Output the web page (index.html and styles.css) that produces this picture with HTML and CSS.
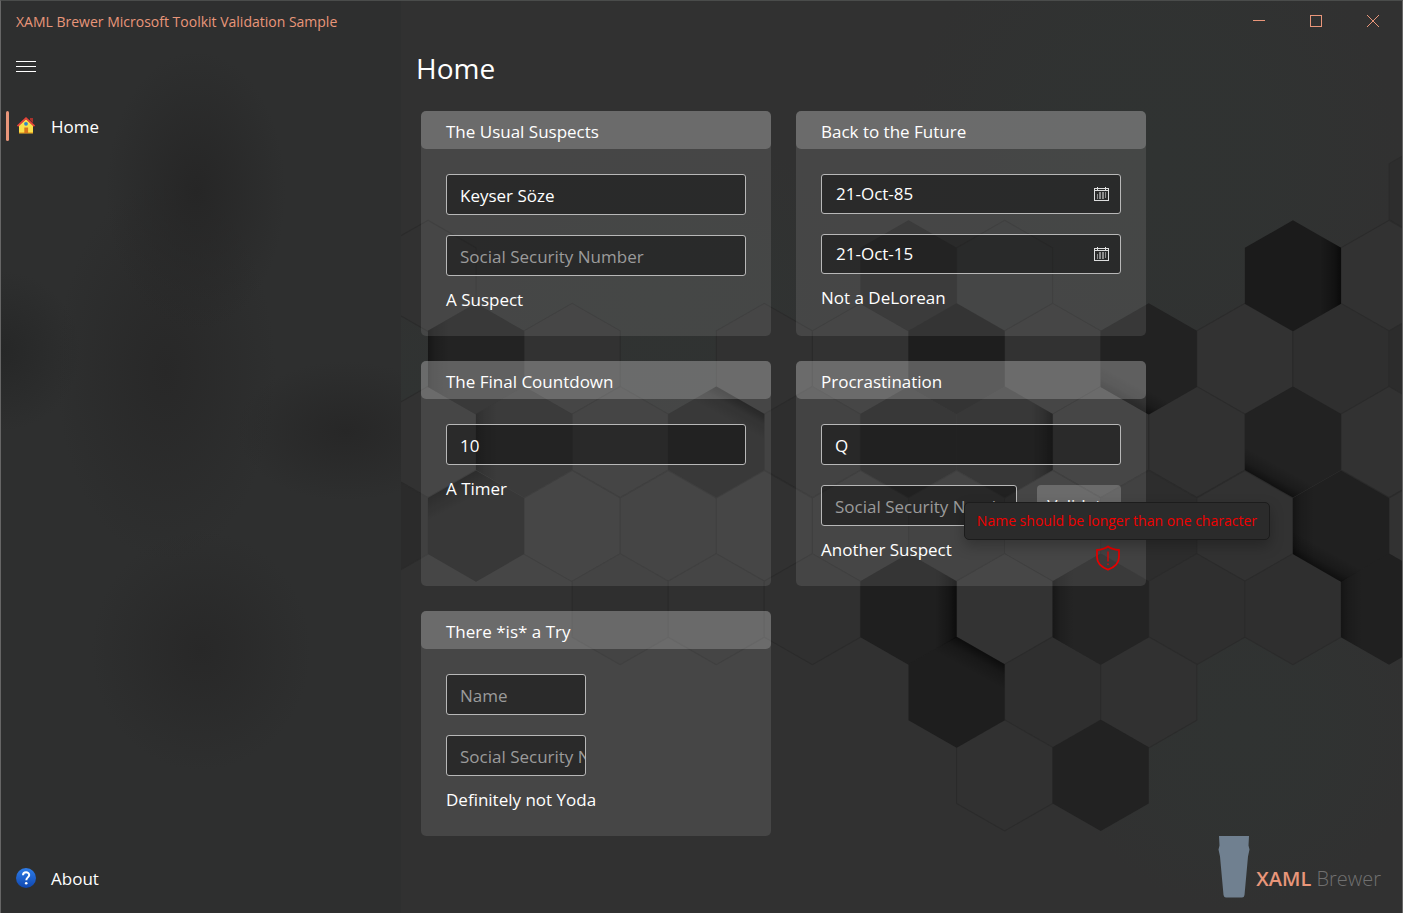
FILE: index.html
```html
<!DOCTYPE html>
<html lang="en">
<head>
<meta charset="utf-8">
<title>XAML Brewer Microsoft Toolkit Validation Sample</title>
<link rel="stylesheet" href="styles.css">
</head>
<body>
<div class="window">
  <aside class="sidebar">
    <div class="app-title">XAML Brewer Microsoft Toolkit Validation Sample</div>
    <button class="menu-button" type="button" aria-label="Toggle navigation">
      <svg width="20" height="11" viewBox="0 0 20 11" shape-rendering="crispEdges"><path d="M0 .5h20M0 5.500h20M0 10.500h20" stroke="#fff"/></svg>
    </button>
    <nav class="nav">
      <a class="nav-item current" href="#home">
        <svg class="nav-icon" viewBox="0 0 20 20">
          <path d="M14 2h3v5l-3-3z" fill="#a8322c"/>
          <path d="M3 9.500 10 3l7 6.500V17H3z" fill="#fbe04a"/>
          <path d="M3 16h14v1.500H3z" fill="#f0b429"/>
          <path d="M1.500 10.200 10 2.200l8.500 8" fill="none" stroke="#e8433a" stroke-width="1.800"/>
          <path d="M8.300 11.500h3.800v5.500H8.300z" fill="#d9751e"/>
          <circle cx="10" cy="7.800" r="1.900" fill="#2f86c8"/>
        </svg>
        <span>Home</span>
      </a>
      <a class="nav-item about" href="#about">
        <svg class="nav-icon" viewBox="0 0 20 20">
          <defs><linearGradient id="help" x1="0" y1="0" x2="0" y2="1"><stop offset="0" stop-color="#2f7de8"/><stop offset="1" stop-color="#0f47b0"/></linearGradient></defs>
          <circle cx="10" cy="10" r="10" fill="url(#help)"/>
          <path d="M7 7.200c0-3.800 6.200-3.700 6.200-.2 0 2.300-2.900 2.500-2.900 5.200" fill="none" stroke="#fff" stroke-width="2"/>
          <circle cx="10.200" cy="15.200" r="1.300" fill="#fff"/>
        </svg>
        <span>About</span>
      </a>
    </nav>
  </aside>

  <main class="main">
    <svg class="backdrop" viewBox="401 1 1001 911" preserveAspectRatio="xMidYMid slice" aria-hidden="true">
      <defs>
        <radialGradient id="tint"><stop offset="0" stop-color="#303332"/><stop offset=".5" stop-color="#303332" stop-opacity=".8"/><stop offset="1" stop-color="#303332" stop-opacity="0"/></radialGradient>
        <path id="hex" d="M.5 0 48.500 27.500V83.500L.5 111-47.500 83.500V27.500z"/>
        <linearGradient id="right" x1="1" y1="0" x2="0" y2="0"><stop offset="0" stop-opacity=".6"/><stop offset=".08" stop-opacity=".3"/><stop offset=".22" stop-opacity="0"/></linearGradient>
        <linearGradient id="left" x1="0" y1="0" x2="1" y2="0"><stop offset="0" stop-opacity=".35"/><stop offset=".08" stop-opacity=".15"/><stop offset=".22" stop-opacity="0"/></linearGradient>
        <linearGradient id="bottomleft" gradientUnits="userSpaceOnUse" x1="-24" y1="97" x2="-14" y2="79"><stop offset="0" stop-opacity=".5"/><stop offset=".4" stop-opacity=".2"/><stop offset="1" stop-opacity="0"/></linearGradient>
        <linearGradient id="topright" gradientUnits="userSpaceOnUse" x1="24" y1="14" x2="13" y2="34"><stop offset="0" stop-opacity=".55"/><stop offset=".4" stop-opacity=".2"/><stop offset="1" stop-opacity="0"/></linearGradient>
        <linearGradient id="topleft" gradientUnits="userSpaceOnUse" x1="-24" y1="14" x2="-14" y2="33"><stop offset="0" stop-opacity=".35"/><stop offset="1" stop-opacity="0"/></linearGradient>
      </defs>
      <rect x="401" width="1002" height="913" fill="#313131"/>
      <ellipse cx="1150" cy="160" rx="250" ry="260" fill="url(#tint)"/>
      <ellipse cx="1240" cy="730" rx="180" ry="180" fill="url(#tint)"/>
      <ellipse cx="660" cy="300" rx="230" ry="170" fill="url(#tint)"/>
      <ellipse cx="401" cy="420" rx="120" ry="150" fill="url(#tint)"/>
      <g fill="#323232" stroke="#2b2b2b">
        <use href="#hex" x="1436" y="136" fill="#2d2d2d"/>
        <use href="#hex" x="428" y="220" fill="#313131"/>
        <use href="#hex" x="1004" y="220" fill="#303131"/>
        <use href="#hex" x="1388" y="220"/>
        <use href="#hex" x="572" y="303"/>
        <use href="#hex" x="764" y="303" fill="#313131"/>
        <use href="#hex" x="860" y="303"/>
        <use href="#hex" x="1052" y="303"/>
        <use href="#hex" x="1244" y="303"/>
        <use href="#hex" x="1340" y="303" fill="#2f2f2f"/>
        <use href="#hex" x="1436" y="303" fill="#2c2c2c"/>
        <use href="#hex" x="428" y="386"/>
        <use href="#hex" x="620" y="386" fill="#303030"/>
        <use href="#hex" x="812" y="386" fill="#2e2e2e"/>
        <use href="#hex" x="1100" y="386"/>
        <use href="#hex" x="1196" y="386" fill="#313131"/>
        <use href="#hex" x="1388" y="386"/>
        <use href="#hex" x="380" y="470" fill="#2b2b2b"/>
        <use href="#hex" x="572" y="470"/>
        <use href="#hex" x="668" y="470" fill="#303030"/>
        <use href="#hex" x="764" y="470" fill="#313131"/>
        <use href="#hex" x="860" y="470"/>
        <use href="#hex" x="956" y="470" fill="#2f2f2f"/>
        <use href="#hex" x="1052" y="470"/>
        <use href="#hex" x="1148" y="470" fill="#2d2d2d"/>
        <use href="#hex" x="1244" y="470"/>
        <use href="#hex" x="1436" y="470"/>
        <use href="#hex" x="620" y="553" fill="#2f2f2f"/>
        <use href="#hex" x="716" y="553" fill="#303030"/>
        <use href="#hex" x="812" y="553" fill="#303030"/>
        <use href="#hex" x="1004" y="553" fill="#333"/>
        <use href="#hex" x="1196" y="553" fill="#2f2f2f"/>
        <use href="#hex" x="1292" y="553" fill="#2f2f2f"/>
        <use href="#hex" x="1052" y="636" fill="#2f2f2f"/>
        <use href="#hex" x="1148" y="636" fill="#313131"/>
        <use href="#hex" x="1004" y="719" fill="#313131"/>
      </g>
      <g fill="#222">
        <use href="#hex" x="1292" y="220" fill="#1b1b1b"/>
        <use href="#hex" x="908" y="220" fill="#252525"/>
        <use href="#hex" x="476" y="303" fill="#232323"/>
        <use href="#hex" x="956" y="303" fill="#1e1e1e"/>
        <use href="#hex" x="1148" y="303"/>
        <use href="#hex" x="524" y="386" fill="#252525"/>
        <use href="#hex" x="716" y="386" fill="#232323"/>
        <use href="#hex" x="908" y="386"/>
        <use href="#hex" x="1004" y="386"/>
        <use href="#hex" x="1292" y="386"/>
        <use href="#hex" x="476" y="470"/>
        <use href="#hex" x="1340" y="470" fill="#202020"/>
        <use href="#hex" x="908" y="553" fill="#1f1f1f"/>
        <use href="#hex" x="1100" y="553" fill="#242424"/>
        <use href="#hex" x="1388" y="553" fill="#202020"/>
        <use href="#hex" x="956" y="636" fill="#1e1e1e"/>
        <use href="#hex" x="1100" y="719"/>
      </g>
      <use href="#hex" x="1292" y="220" fill="url(#right)"/>
      <use href="#hex" x="908" y="553" fill="url(#right)"/>
      <use href="#hex" x="1004" y="386" fill="url(#right)"/>
      <use href="#hex" x="1340" y="470" fill="url(#left)"/>
      <use href="#hex" x="1388" y="553" fill="url(#left)"/>
      <use href="#hex" x="1100" y="553" fill="url(#left)"/>
      <use href="#hex" x="476" y="303" fill="url(#left)"/>
      <use href="#hex" x="524" y="386" fill="url(#left)"/>
      <use href="#hex" x="1292" y="386" fill="url(#bottomleft)"/>
      <use href="#hex" x="1340" y="470" fill="url(#bottomleft)"/>
      <use href="#hex" x="1148" y="303" fill="url(#bottomleft)"/>
      <use href="#hex" x="956" y="636" fill="url(#topright)"/>
      <use href="#hex" x="716" y="386" fill="url(#topright)"/>
      <use href="#hex" x="476" y="470" fill="url(#topleft)"/>
    </svg>

    <div class="titlebar">
      <button type="button" aria-label="Minimize"><svg width="12" height="12" viewBox="0 0 12 12" shape-rendering="crispEdges"><path d="M0 5.500h12"/></svg></button>
      <button type="button" aria-label="Maximize"><svg width="12" height="12" viewBox="0 0 12 12" shape-rendering="crispEdges"><path d="M.5.500h11v11H.5z"/></svg></button>
      <button type="button" aria-label="Close"><svg width="12" height="12" viewBox="0 0 12 12"><path d="m0 0 12 12M12 0 0 12"/></svg></button>
    </div>

    <h1 class="page-title">Home</h1>

    <div class="cards">
      <section class="card">
        <h2>The Usual Suspects</h2>
        <div class="card-body">
          <div class="fields">
            <input type="text" value="Keyser Söze" aria-label="Name">
            <input type="text" placeholder="Social Security Number" aria-label="Social Security Number">
          </div>
          <p class="status">A Suspect</p>
        </div>
      </section>

      <section class="card">
        <h2>Back to the Future</h2>
        <div class="card-body">
          <div class="fields">
            <button class="date" type="button"><span>21-Oct-85</span>
              <svg width="15" height="15" viewBox="0 0 15 15" shape-rendering="crispEdges"><path d="M.5 1.500h14v12H.5zM0 3.500h15M3.500 0v3M11.500 0v3" fill="none" stroke="#ddd"/><path d="M3.500 7v5M5.500 5v7M6.500 5v7M8.500 5v7M9.500 5v7M11.500 5v6" stroke="#8c8c8c"/></svg>
            </button>
            <button class="date" type="button"><span>21-Oct-15</span>
              <svg width="15" height="15" viewBox="0 0 15 15" shape-rendering="crispEdges"><path d="M.5 1.500h14v12H.5zM0 3.500h15M3.500 0v3M11.500 0v3" fill="none" stroke="#ddd"/><path d="M3.500 7v5M5.500 5v7M6.500 5v7M8.500 5v7M9.500 5v7M11.500 5v6" stroke="#8c8c8c"/></svg>
            </button>
          </div>
          <p class="status">Not a DeLorean</p>
        </div>
      </section>

      <section class="card">
        <h2>The Final Countdown</h2>
        <div class="card-body">
          <div class="fields">
            <input type="text" value="10" aria-label="Countdown">
          </div>
          <p class="status">A Timer</p>
        </div>
      </section>

      <section class="card">
        <h2>Procrastination</h2>
        <div class="card-body">
          <div class="fields">
            <input type="text" value="Q" aria-label="Name">
            <div class="field-row">
              <input type="text" placeholder="Social Security Number" aria-label="Social Security Number">
              <button class="validate" type="button">Validate</button>
            </div>
          </div>
          <div class="status-row">
            <p class="status">Another Suspect</p>
            <div class="warning">
              <svg width="26" height="26" viewBox="0 0 26 26" fill="none" stroke="#e60000"><path d="M13 1.500c3 2.300 6.500 3.300 11 3.500v7c0 6-4 10-11 12.700C6 22 2 18 2 12V5c4.500-.2 8-1.200 11-3.500z" stroke-width="1.800"/><path d="M13 6.500v10M13 18.500v1.500" stroke-width="1.300"/></svg>
              <div class="tooltip" role="tooltip">Name should be longer than one character</div>
            </div>
          </div>
        </div>
      </section>

      <section class="card">
        <h2>There *is* a Try</h2>
        <div class="card-body">
          <div class="fields narrow">
            <input type="text" placeholder="Name" aria-label="Name">
            <input type="text" placeholder="Social Security Number" aria-label="Social Security Number">
          </div>
          <p class="status">Definitely not Yoda</p>
        </div>
      </section>
    </div>

    <footer class="brand">
      <svg width="32" height="62" viewBox="0 0 32 62"><path d="M1 0h30l-.5 9.500 1 4-1.500 7L26.500 59q-.3 2.500-2.500 2.500H8Q6 61.500 5.500 59L2 20.500.5 13.500l1-4z" fill="#708090"/></svg>
      <p><strong>XAML</strong> <span>Brewer</span></p>
    </footer>
  </main>
</div>
</body>
</html>
```
FILE: styles.css
```css
* { box-sizing: border-box; }

body {
  margin: 0;
  background: #313131;
  color: #fff;
  font-family: "Open Sans", "Noto Sans", sans-serif;
  font-size: 17px;
  line-height: 24px;
}

h1, h2, p { margin: 0; font-weight: 400; }

button, input { font: inherit; color: inherit; }

button { border: 0; padding: 0; background: none; }

svg { display: block; flex: none; }

.window {
  display: grid;
  grid-template-columns: 400px minmax(0, 1fr);
  min-height: 100vh;
  border: 1px solid #666;
  border-top-color: #4a4c4b;
}

.sidebar {
  display: flex;
  flex-direction: column;
  background:
    radial-gradient(ellipse 90px 140px at 195px 190px, #262626, transparent),
    radial-gradient(ellipse 110px 190px at 165px 370px, #282828, transparent),
    radial-gradient(ellipse 80px 80px at 0 350px, #262727, transparent),
    radial-gradient(ellipse 110px 70px at 345px 430px, #272727, transparent),
    radial-gradient(ellipse 110px 120px at 200px 650px, #282828, transparent),
    #2e2f2f;
}

.app-title {
  padding: 10px 15px 0;
  color: #e9967a;
  font-size: 14px;
  line-height: 22px;
}

.menu-button {
  align-self: flex-start;
  margin-top: 13px;
  padding: 15px;
}

.nav {
  display: flex;
  flex-direction: column;
  flex: 1;
  margin-top: 14px;
}

.nav-item {
  display: flex;
  align-items: center;
  gap: 15px;
  height: 50px;
  padding: 0 15px 0 5px;
  color: inherit;
  text-decoration: none;
}

.nav-item span { padding-top: 2px; }

.nav-item::before {
  content: "";
  width: 3px;
  height: 30px;
  border-radius: 2px;
  margin-right: -8px;
}

.nav-item.current::before { background: #e9967a; }

.nav-item.about { margin-top: auto; margin-bottom: 10px; }

.nav-icon { width: 20px; height: 20px; }

.main {
  position: relative;
  isolation: isolate;
  display: flex;
  flex-direction: column;
}

.backdrop {
  position: absolute;
  inset: 0;
  z-index: -1;
  width: 100%;
  height: 100%;
}

.titlebar {
  display: flex;
  justify-content: flex-end;
  padding-right: 1px;
}

.titlebar button {
  display: grid;
  place-items: center;
  width: 57px;
  height: 40px;
}

.titlebar path { fill: none; stroke: #e9967a; }

.page-title {
  padding: 7px 15px 23px;
  font-size: 28px;
  line-height: 40px;
}

.cards {
  display: grid;
  grid-template-columns: repeat(2, 350px);
  gap: 25px;
  padding: 0 20px;
}

.card {
  min-height: 225px;
  border-radius: 5px;
  background: rgba(255, 255, 255, .1);
}

.card h2 {
  padding: 9px 25px 5px;
  border-radius: 5px;
  background: rgba(255, 255, 255, .2);
  font-size: 17px;
  line-height: 24px;
}

.card-body { padding: 25px 25px 0; }

.fields { display: grid; gap: 20px; }

.fields.narrow { width: 140px; }

.fields input,
.date {
  width: 100%;
  min-width: 0;
  border: 1px solid #b8b8b8;
  border-radius: 3px;
  background: rgba(0, 0, 0, .4);
}

.fields input {
  height: 41px;
  padding: 2px 0 0 13px;
}

.fields input::placeholder { color: #9b9b9b; opacity: 1; }

.date {
  display: flex;
  align-items: center;
  justify-content: space-between;
  height: 40px;
  padding: 0 11px 0 14px;
}

.field-row {
  display: grid;
  grid-template-columns: minmax(0, 1fr) 84px;
  gap: 20px;
}

.validate {
  border-radius: 4px;
  background: rgba(255, 255, 255, .2);
}

.status { margin-top: 12px; }

.status-row { display: flex; justify-content: space-between; }

.warning { position: relative; margin-top: 19px; }

.tooltip {
  position: absolute;
  right: -149px;
  bottom: 31px;
  padding: 7px 12px;
  border: 1px solid #1c1c1c;
  border-radius: 5px;
  background: #2b2b2b;
  box-shadow: 0 6px 14px rgba(0, 0, 0, .25);
  color: #f00000;
  font-size: 14px;
  line-height: 22px;
  white-space: nowrap;
}

.brand {
  display: flex;
  align-self: flex-end;
  gap: 6px;
  margin-top: auto;
  padding: 0 21px 15px 0;
}

.brand p {
  padding-top: 28px;
  font-size: 20px;
  line-height: 30px;
}

.brand strong { color: #e9967a; font-weight: 600; }

.brand span { color: #707070; font-weight: 300; }
```
